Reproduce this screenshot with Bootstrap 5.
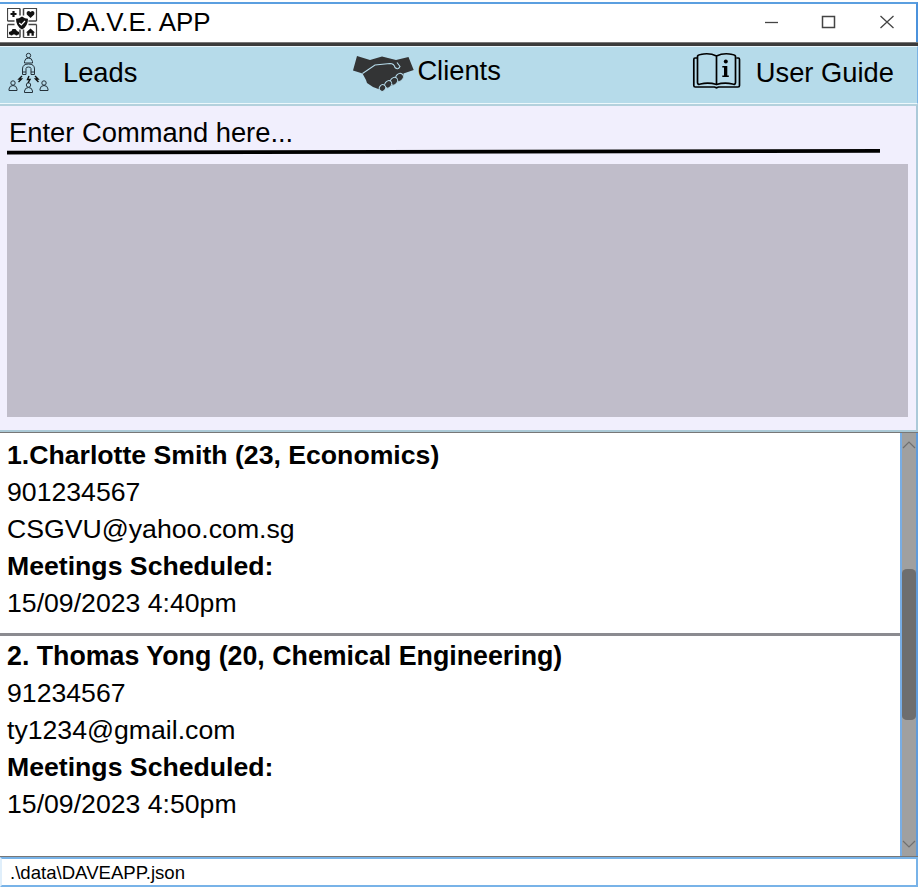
<!DOCTYPE html>
<html lang="en">
<head>
<meta charset="utf-8">
<meta name="viewport" content="width=device-width, initial-scale=1">
<title>D.A.V.E. APP</title>
<link href="https://cdn.jsdelivr.net/npm/bootstrap@5.3.0/dist/css/bootstrap.min.css" rel="stylesheet">
<style>
body{font-family:"Liberation Sans",Arial,sans-serif;font-size:26.65px;line-height:37px;color:#000;background:#fff;height:889px;overflow:hidden}
svg{display:block;flex:none}
.app-window{width:918px;height:888px}
.title-bar{border-top:2px solid #5b9fe0;border-right:2px solid #4b92dc;margin-top:2px;height:40px;padding-left:7px}
.title-text{font-size:25.9px;margin-left:18px;padding-bottom:2px}
.title-rule{height:4px;background:#3b3b3b;border-top:1px solid #777}
.menu-strip{height:58px;font-size:27.3px;background:#b6dbea;border-top:1px solid #e8f5fb;border-bottom:1px solid #edf8fc;border-right:1px solid #7ab2e4}
.menu-link{color:#000;text-decoration:none}
.command-pane{height:328px;background:#f1effd;border-top:2px solid #b4d1dd;border-right:2px solid #abc9d9;border-bottom:2px solid #abc9d6;padding:9px 8px 0 7px}
.command-input{border:0;background:transparent;width:873px;height:34px;padding:1px 0 0 2px;font-size:27.35px;color:#000;outline:0;line-height:33px}
.command-input::placeholder{color:#000;opacity:1}
.result-box{height:253px;background:#c0bdca;margin-top:9px;width:901px}
.list-area{height:425px;border-top:1px solid #777;border-bottom:1px solid #777}
.person{height:200px;padding:4px 7px 0;white-space:nowrap}
.person + .person{border-top:3px solid #8b8b90;padding-top:2px;height:223px}
.person + .person .fw-bold:first-child{font-size:26.78px}
.scroll-track{width:18px;background:#a0a0a0;border-left:2px solid #78ade4;border-right:2px solid #5f9bdb;padding:8px 0 8px}
.scroll-thumb{height:151px;width:14px;background:#6e6e6e;border-radius:5px/4px;margin-top:120px}
.status-bar{height:30px;border:2px solid #78b3e8;border-left-color:#e0effb;font-size:18.6px;line-height:28px;padding-left:8px}
.label-leads{padding:7px 0 0 1px}
.clients{margin-left:215px}
.label-clients{padding:5px 0 0 3px}
.guide{margin-left:191px}
.label-guide{padding:7px 0 0 14px;white-space:nowrap}
</style>
<script src="https://cdn.jsdelivr.net/npm/bootstrap@5.3.0/dist/js/bootstrap.bundle.min.js"></script>
</head>
<body>
<div class="app-window d-flex flex-column">
  <header class="title-bar d-flex align-items-center flex-shrink-0">
    <svg width="31" height="31" viewBox="0.500 0.500 31 31" fill="none" stroke="#111" stroke-width="1.2">
      <path d="M13.500 1v7M1 13.500h7M17 1v7m5 5.500h8M13.500 30v-8M1 17h7m9 13v-8m5-5h8" stroke="#444" stroke-width="1.500"/>
      <path d="M13.500 1H1v12.500M17 1h13v12.500M1 17v13h12.500M17 30h13V17" stroke="#444"/>
      <path d="M7 3.500v6M4 6.500h6" stroke-width="2.200"/>
      <path d="M24 10.500 20.300 7Q19.500 3.500 22.500 3.500l1.500 1 1.500-1q3.200 0 2.200 3.500z" fill="#111" stroke="none"/>
      <path d="M15.500 9q3 2.200 6 2.200 0 7.500-6 10.800-6-3.300-6-10.800 3 0 6-2.200z" fill="#111" stroke="none"/>
      <path d="m12.800 15.500 2 2 3.700-4" stroke="#fff"/>
      <path d="M2.500 24.500 5 23.500l1-2h3l1.500 2 2 1v2.500h-10zM24 21l4.500 4h-1.200v3.200h-2.300v-2.500h-2v2.500h-2.300V25h-1.200z" fill="#111" stroke="none"/>
      <circle cx="5" cy="26.800" r="1.200" fill="#111" stroke="none"/><circle cx="10" cy="26.800" r="1.200" fill="#111" stroke="none"/>
    </svg>
    <span class="title-text">D.A.V.E. APP</span>
    <div class="ms-auto d-flex align-items-center" aria-hidden="true">
      <svg width="152" height="36" viewBox="764 5 152 36" fill="none" stroke="#444" stroke-width="1.3"><path d="M765 22.500h13"/><path d="M822.500 16.500h12v11h-12z" stroke-width="1.500"/><path d="m880.500 16 13 12m0-12-13 12"/></svg>
    </div>
  </header>
  <div class="title-rule flex-shrink-0"></div>
  <nav class="menu-strip d-flex flex-shrink-0">
    <a class="menu-link d-flex leads" href="#">
      <svg width="62" height="56" viewBox="0 47 62 56" fill="none" stroke="#24313a" stroke-width="1">
        <defs><g id="bust"><circle cx="0" cy="-2.500" r="2.200"/><path d="M-4 5V3.500Q-3.500 0 0 0t4 3.500V5z"/></g></defs>
        <use href="#bust" x="28.500" y="58"/><use href="#bust" x="13" y="85.500"/><use href="#bust" x="28.500" y="87.500"/><use href="#bust" x="44" y="85.500"/>
        <path d="M22.500 74.500v-5.500q0-5 6-5t6 5v5.500h-3.500v-6q0-1.500-2.500-1.500t-2.500 1.500v6zM22.500 72H26m5 0h3.500"/>
        <path d="m22 76-3 3h2.500l-3 3m10.500-6-1.500 3.500h2.500l-2 3.500m7-7 3 3h-2.500l3 3" stroke="#111" stroke-width="1.400"/>
      </svg>
      <span class="label-leads">Leads</span>
    </a>
    <a class="menu-link d-flex clients" href="#">
      <svg width="62" height="56" viewBox="352 47 62 56">
        <path d="M357 56 353 70.500 362.500 73.500 366 80 367 83 370 85 373 87 377 88.500 381 90 386 88 395 84 403 78 403.500 73.500 413.700 70 408.500 57 396 60 382 56.500 370 60z" fill="#333435"/>
        <path d="m362.500 73.500 12.500-8.500 15-1.500q4 0 5 4 3 3 5-1l-3-4" fill="none" stroke="#b6dbea" stroke-width="1.100"/>
        <g fill="#333435" stroke="#b6dbea" stroke-width="1"><ellipse cx="399.500" cy="77.300" rx="3.600" ry="4.200" transform="rotate(38 399.500 77.300)"/><ellipse cx="393.900" cy="81.200" rx="3.400" ry="4.100" transform="rotate(38 393.900 81.200)"/><ellipse cx="388.200" cy="84.300" rx="3.200" ry="4" transform="rotate(38 388.200 84.300)"/><ellipse cx="382.500" cy="88" rx="3" ry="3.400" transform="rotate(38 382.500 88)"/></g>
      </svg>
      <span class="label-clients">Clients</span>
    </a>
    <a class="menu-link d-flex guide" href="#">
      <svg width="50" height="56" viewBox="692 47 50 56" fill="none" stroke="#000" stroke-width="1.700">
        <path d="M697 58h-2q-1.200 0-1.200 1.500v26q0 1.500 1.500 1.500h19.200l2 .8 2-.8H738q1.500 0 1.500-1.500v-26q0-1.500-1.200-1.500h-2"/>
        <path d="M716.500 56q-7-3.500-16-1.500-3 .5-3 2v26q0 2.500 3 1.500 8-2 16 .5 8-2.500 16-.5 3 1 3-1.500v-26q0-1.500-3-2-9-2-16 1.500zv28.500"/>
        <circle cx="725.800" cy="61.500" r="2" fill="#000" stroke="none"/><path d="M722.300 66h5v9.500h1.500V77h-6.500v-1.500h1.700V67.500h-1.700z" fill="#000" stroke="none"/>
      </svg>
      <span class="label-guide">User Guide</span>
    </a>
  </nav>
  <section class="command-pane flex-shrink-0">
    <input class="command-input d-block" type="text" placeholder="Enter Command here..." aria-label="Command">
    <svg width="874" height="6" viewBox="0 0 874 6"><path d="M0 3.600 873 1.900" stroke="#000" stroke-width="3.800"/></svg>
    <div class="result-box"></div>
  </section>
  <main class="list-area d-flex flex-shrink-0">
    <div class="flex-grow-1">
      <article class="person"><div class="fw-bold">1.Charlotte Smith (23, Economics)</div><div>901234567</div><div>CSGVU@yahoo.com.sg</div><div class="fw-bold">Meetings Scheduled:</div><div>15/09/2023 4:40pm</div></article>
      <article class="person"><div class="fw-bold">2. Thomas Yong (20, Chemical Engineering)</div><div>91234567</div><div>ty1234@gmail.com</div><div class="fw-bold">Meetings Scheduled:</div><div>15/09/2023 4:50pm</div></article>
    </div>
    <div class="scroll-track d-flex flex-column flex-shrink-0">
      <svg width="14" height="8" viewBox="0 0 14 8" fill="none" stroke="#707070" stroke-width="1.200"><path d="m1 7 6-6 6 6"/></svg>
      <div class="scroll-thumb"></div>
      <svg class="mt-auto" width="14" height="8" viewBox="0 0 14 8" fill="none" stroke="#707070" stroke-width="1.200"><path d="m1 1 6 6 6-6"/></svg>
    </div>
  </main>
  <footer class="status-bar flex-shrink-0">.\data\DAVEAPP.json</footer>
</div>
</body>
</html>
